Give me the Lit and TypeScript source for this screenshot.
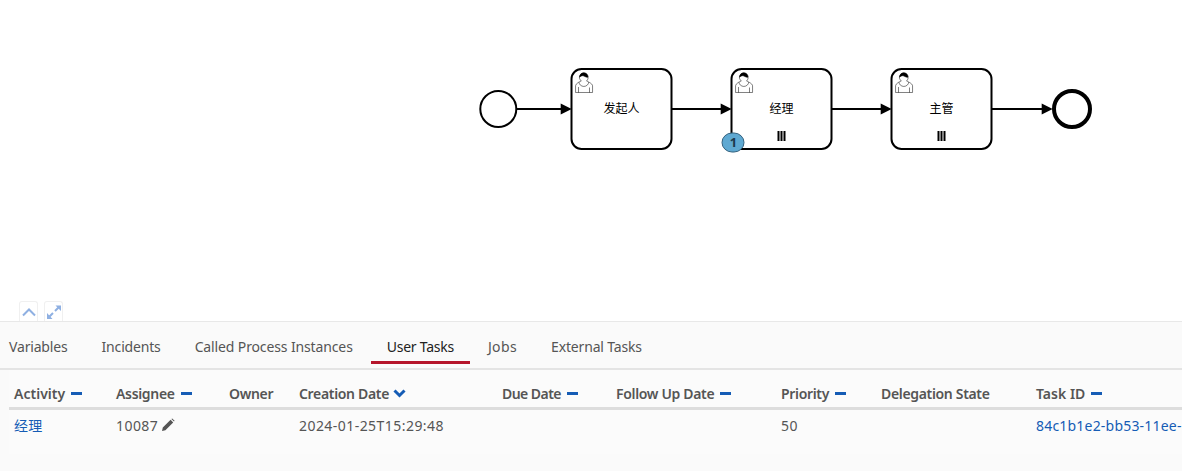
import { LitElement, html, css, svg } from "lit";
import { customElement } from "lit/decorators.js";

const U1 = "c 0.909,-0.845 1.594,-2.049 1.594,-3.385 0,-2.554 -1.805,-4.622 -4.357,-4.622 -2.552,0 -4.288,2.068 -4.288,4.622 0,1.348 0.974,2.562 1.896,3.405 -0.529,0.187 -5.669,2.097 -5.794,4.756 v 6.718 h 17 v -6.718 c 0,-2.298 -5.528,-4.595 -6.051,-4.776 z m -8,6 l 0,5.5 m 11,0 l 0,-5";
const U2 = "m 2.162,1.009 c 0,2.447 -2.158,4.431 -4.821,4.431 -2.665,0 -4.822,-1.981 -4.822,-4.431";
const U3 = "m -6.9,-3.8 c 0,0 2.251,-2.358 4.274,-1.177 2.024,1.181 4.221,1.537 4.124,0.965 -0.098,-0.57 -0.117,-3.791 -4.191,-4.136 -3.575,0.001 -4.208,3.367 -4.207,4.348 z";

const task = (x: number, label: string, marker: boolean) => svg`
  <g transform="translate(${x + 0.5},69)">
    <rect class="task" x="0" y="0" width="100" height="80" rx="10" ry="10"></rect>
    <path class="usr" d="M 15,12 ${U1}"></path>
    <path class="usr" d="M 15,12 ${U2}"></path>
    <path class="usr-h" d="M 15,12 ${U3}"></path>
    <text class="lbl" x="50" y="44" text-anchor="middle">${label}</text>
    ${marker ? svg`<path class="bars" d="M 47,62 v 10 M 50,62 v 10 M 53,62 v 10"></path>` : ""}
  </g>`;

const flow = (x1: number, x2: number) => svg`
  <path class="flow" d="M ${x1},109 L ${x2 - 10},109"></path>
  <path class="arrow" d="M ${x2 + 0.7},109 L ${x2 - 10.3},103.5 L ${x2 - 10.3},114.5 Z"></path>`;

const TABS = ["Variables", "Incidents", "Called Process Instances", "User Tasks", "Jobs", "External Tasks"];
const HEADS: [string, boolean, string][] = [
  ["Activity", true, "loose"],
  ["Assignee", true, ""],
  ["Owner", false, ""],
  ["Creation Date", false, ""],
  ["Due Date", true, "tight"],
  ["Follow Up Date", true, ""],
  ["Priority", true, ""],
  ["Delegation State", false, ""],
  ["Task ID", true, "loose"],
];

@customElement("app-root")
export class AppRoot extends LitElement {
  static styles = css`
    :host {
      display: block;
      width: 1182px;
      height: 471px;
      overflow: hidden;
      background: #fff;
      font-family: "Noto Sans", "Noto Sans CJK SC", sans-serif;
      font-size: 14px;
      color: #555;
    }
    .canvas { display: block; width: 1182px; height: 301px; }
    .task { fill: #fff; stroke: #000; stroke-width: 2; }
    .usr { fill: #fff; stroke: #000; stroke-width: 0.5; }
    .usr-h { fill: #000; stroke: #000; stroke-width: 0.5; }
    .lbl { font: 12px "Noto Sans CJK SC", sans-serif; fill: #000; }
    .bars { fill: none; stroke: #000; stroke-width: 2; }
    .flow { fill: none; stroke: #000; stroke-width: 2; }
    .arrow { fill: #000; stroke: none; }
    .start { fill: #fff; stroke: #000; stroke-width: 2; }
    .end { fill: #fff; stroke: #000; stroke-width: 4; }
    .badge { fill: #5fa9d2; stroke: #33627f; stroke-width: 1; }
    .badge-t { font: bold 13px "Noto Sans", sans-serif; fill: #1d3a4d; }

    .tools { display: flex; gap: 6px; height: 20px; padding-left: 19px; }
    .tool {
      width: 19px; height: 20px; box-sizing: border-box;
      border: 1px solid #f0f0f0; border-bottom: none;
      border-radius: 3px 3px 0 0; background: #fff;
      display: flex; align-items: center; justify-content: center;
    }
    .tool svg { display: block; }

    .panel {
      height: 150px; box-sizing: border-box;
      background: #fafafa; border-top: 1px solid #e8e8e8;
    }
    .tabs {
      display: flex; gap: 2px; height: 48px; box-sizing: border-box;
      margin-left: -7px;
      border-bottom: 2px solid #e4e4e4;
      width: 1189px;
    }
    .tab {
      padding: 15px 16px 0; line-height: 20px; color: #555; white-space: nowrap;
      box-sizing: border-box; height: 42px; letter-spacing: -0.17px;
    }
    .tab:nth-child(3) { letter-spacing: -0.13px; }
    .tab:nth-child(4) { letter-spacing: -0.25px; }
    .tab:nth-child(5) { letter-spacing: 0.4px; }
    .tab.active { color: #222; border-bottom: 3px solid #b5152b; }

    .grid {
      margin-left: 9px;
      background: #fbfbfb;
      display: grid;
      grid-template-columns: 102px 113px 70px 203px 114px 165px 100px 155px minmax(0, 1fr);
    }
    .hd {
      font-weight: 600; height: 40px; box-sizing: border-box;
      padding: 14px 0 0 5px; line-height: 20px; white-space: nowrap;
      border-bottom: 3px solid #ddd;
      display: flex; align-items: flex-start; gap: 6px; letter-spacing: -0.33px;
    }
    .hd.loose { letter-spacing: 0.02px; }
    .hd.tight { letter-spacing: -0.55px; }
    .dash { width: 11px; height: 3px; background: #155cb5; margin-top: 8px; }
    .chev { margin: 5px 0 0 -2px; display: block; }
    .cell {
      padding: 6px 0 0 5px; line-height: 20px; height: 44px; box-sizing: border-box;
      white-space: nowrap; letter-spacing: 0.45px;
    }
    .link { color: #155cb5; letter-spacing: 0.2px; }
    .cn { font-family: "Noto Sans CJK SC", sans-serif; padding-top: 5px; }
    .pencil { display: inline-block; vertical-align: -1px; margin-left: 3px; }
  `;

  render() {
    return html`
      <svg class="canvas" viewBox="0 0 1182 301">
        <circle class="start" cx="498.3" cy="109" r="18"></circle>
        ${flow(516, 571)} ${flow(672, 731)} ${flow(832, 891)} ${flow(992, 1052)}
        ${task(571, "发起人", false)} ${task(731, "经理", true)} ${task(891, "主管", true)}
        <circle class="end" cx="1072" cy="109" r="18"></circle>
        <rect class="badge" x="722" y="133" width="22" height="19" rx="10" ry="9.5"></rect>
        <text class="badge-t" x="733.5" y="147" text-anchor="middle">1</text>
      </svg>
      <div class="tools">
        <div class="tool">
          <svg width="14" height="10" viewBox="0 0 14 10">
            <path d="M1 8.5 L7 2.5 L13 8.5" fill="none" stroke="#8fb0e2" stroke-width="2"></path>
          </svg>
        </div>
        <div class="tool">
          <svg width="16" height="16" viewBox="0 0 16 16">
            <path d="M9 7 L13 3 M3 13 L7 9" fill="none" stroke="#8fb0e2" stroke-width="2"></path>
            <path d="M9.5 1.5 H15 V7 Z M1 9 V15 H6.5 Z" fill="#8fb0e2"></path>
          </svg>
        </div>
      </div>
      <div class="panel">
        <div class="tabs">
          ${TABS.map((t) => html`<div class="tab ${t === "User Tasks" ? "active" : ""}">${t}</div>`)}
        </div>
        <div class="grid">
          ${HEADS.map(
            ([h, dash, fit]) => html`<div class="hd ${fit}">
              <span>${h}</span>
              ${dash ? html`<span class="dash"></span>` : ""}
              ${h === "Creation Date"
                ? html`<svg class="chev" width="13" height="9" viewBox="0 0 13 9">
                    <path d="M1.5 1.5 L6.5 6.5 L11.5 1.5" fill="none" stroke="#155cb5" stroke-width="3"></path>
                  </svg>`
                : ""}
            </div>`
          )}
          <div class="cell link cn">经理</div>
          <div class="cell">10087<svg class="pencil" width="14" height="14" viewBox="0 0 14 14">
              <path d="M1 13 L1.8 9.6 L9.6 1.8 L12.2 4.4 L4.4 12.2 Z M10.4 1 L11.2 0.4 L13.6 2.8 L13 3.6 Z" fill="#555"></path>
            </svg></div>
          <div class="cell"></div>
          <div class="cell">2024-01-25T15:29:48</div>
          <div class="cell"></div>
          <div class="cell"></div>
          <div class="cell">50</div>
          <div class="cell"></div>
          <div class="cell link">84c1b1e2-bb53-11ee-b1a3-0242ac110002</div>
        </div>
      </div>
    `;
  }
}
